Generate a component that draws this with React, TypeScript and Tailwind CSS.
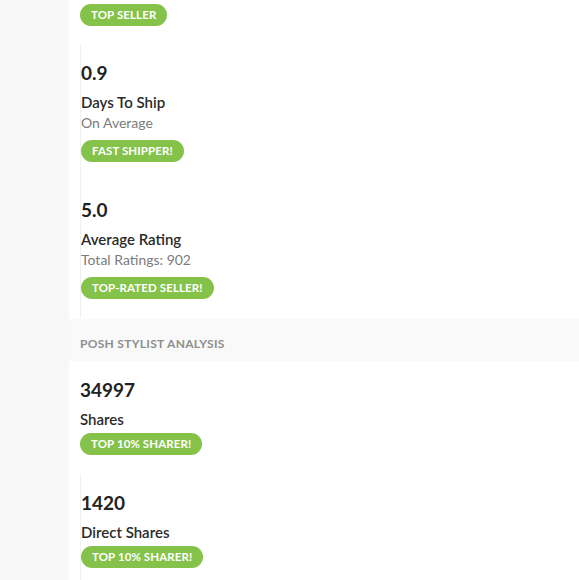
const font = { fontFamily: "Lato, 'Open Sans', sans-serif" };

interface Stat {
  value?: string;
  title?: string;
  sub?: string;
  badge: string;
}

const sellerStats: Stat[] = [
  { badge: "Top Seller" },
  { value: "0.9", title: "Days To Ship", sub: "On Average", badge: "Fast Shipper!" },
  { value: "5.0", title: "Average Rating", sub: "Total Ratings: 902", badge: "Top-Rated Seller!" },
];

const stylistStats: Stat[] = [
  { value: "34997", title: "Shares", badge: "Top 10% Sharer!" },
  { value: "1420", title: "Direct Shares", badge: "Top 10% Sharer!" },
];

function Badge({ label, className = "" }: { label: string; className?: string }) {
  return (
    <div
      className={`flex h-[22px] w-fit items-center rounded-full bg-[#84c249] px-[11px] text-[11.5px] font-bold uppercase leading-none tracking-[0.1px] text-white ${className}`}
    >
      {label}
    </div>
  );
}

function StatItem({ stat, first }: { stat: Stat; first: boolean }) {
  if (!stat.value) {
    return (
      <div className="pb-[18px] pt-[4px]">
        <Badge label={stat.badge} />
      </div>
    );
  }
  return (
    <div className={`pb-[19px] pt-[16px] ${first ? "" : "border-l border-[#f0f0f0]"}`}>
      <div className="text-[19px] font-bold leading-[26px] text-[#222]">{stat.value}</div>
      <div className="mt-[6px] text-[15px] font-semibold leading-[20px] text-[#2a2a2a]">{stat.title}</div>
      {stat.sub && <div className="text-[14px] leading-[22px] text-[#7b7b7b]">{stat.sub}</div>}
      <Badge label={stat.badge} className={stat.sub ? "mt-[6px]" : "mt-[4px]"} />
    </div>
  );
}

export default function App() {
  return (
    <div className="flex min-h-[580px] w-[579px] bg-[#f8f8f8]" style={font}>
      <div className="w-[69px] shrink-0" />
      <div className="flex-1 bg-white">
        <div className="pl-[11px]">
          {sellerStats.map((s, i) => (
            <StatItem key={i} stat={s} first={i === 0} />
          ))}
        </div>
        <div className="mt-[1px] bg-[#f9f9f9] pb-[9px] pl-[11px] pt-[17px]">
          <h3 className="text-[12px] font-bold uppercase leading-[16px] tracking-[0.3px] text-[#8e8e8e]">
            Posh Stylist Analysis
          </h3>
        </div>
        <div className="pl-[11px]">
          {stylistStats.map((s, i) => (
            <StatItem key={i} stat={s} first={i === 0} />
          ))}
        </div>
      </div>
    </div>
  );
}
